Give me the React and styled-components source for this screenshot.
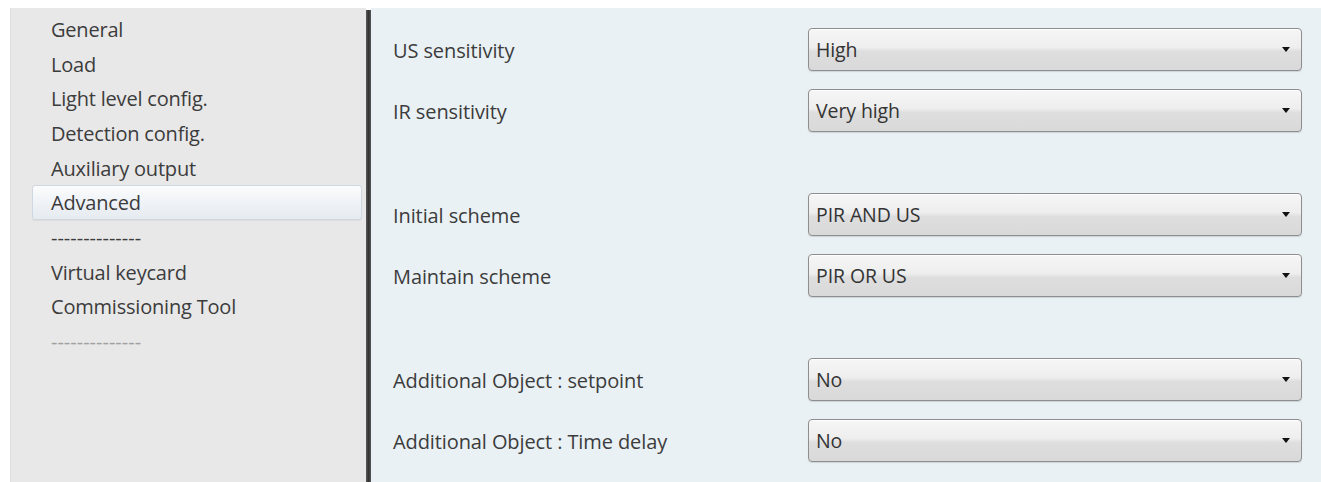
import React from 'react';
import styled, { createGlobalStyle } from 'styled-components';

const GlobalStyle = createGlobalStyle`
  html, body {
    margin: 0;
    padding: 0;
    background: #ffffff;
  }
  body {
    font-family: "Open Sans", "Noto Sans", sans-serif;
    -webkit-font-smoothing: antialiased;
  }
`;

const menuItems = [
  { label: 'General' },
  { label: 'Load' },
  { label: 'Light level config.' },
  { label: 'Detection config.' },
  { label: 'Auxiliary output' },
  { label: 'Advanced', active: true },
  { label: '--------------', separator: 'dark' },
  { label: 'Virtual keycard' },
  { label: 'Commissioning Tool' },
  { label: '--------------', separator: 'light' },
];

const groups = [
  [
    { label: 'US sensitivity', value: 'High' },
    { label: 'IR sensitivity', value: 'Very high' },
  ],
  [
    { label: 'Initial scheme', value: 'PIR AND US' },
    { label: 'Maintain scheme', value: 'PIR OR US' },
  ],
  [
    { label: 'Additional Object : setpoint', value: 'No' },
    { label: 'Additional Object : Time delay', value: 'No' },
  ],
];

const Window = styled.div`
  display: flex;
  height: 482px;
  padding: 8px 0 0 10px;
  box-sizing: border-box;
  overflow: hidden;
`;

const Sidebar = styled.nav`
  width: 356px;
  flex-shrink: 0;
  background: #e8e8e8;
  border-left: 1px solid #dddddd;
  box-sizing: border-box;
  padding: 4px 4px 0 21px;
`;

const MenuItem = styled.div`
  height: 34.7px;
  display: flex;
  align-items: center;
  padding-left: 18px;
  box-sizing: border-box;
  font-size: 20px;
  color: ${p => (p.separator === 'light' ? '#a0a0a0' : '#3c3c3c')};
  letter-spacing: ${p => (p.separator ? '0' : '-0.2px')};
  border-radius: 3px;
  border: 1px solid ${p => (p.active ? '#cfd8e0' : 'transparent')};
  background: ${p =>
    p.active
      ? 'linear-gradient(to bottom, #fbfcfd 0%, #eef2f6 55%, #e6ebf0 100%)'
      : 'transparent'};
  box-shadow: ${p => (p.active ? '0 1px 1px rgba(0,0,0,0.05)' : 'none')};
`;

const Divider = styled.div`
  width: 5px;
  flex-shrink: 0;
  margin-top: 2px;
  background: linear-gradient(to right, #5a5a5a, #333333 50%, #555555);
`;

const Content = styled.main`
  flex: 1;
  background: #e9f1f4;
  padding: 20px 19px 0 22px;
  display: flex;
  flex-direction: column;
  gap: 61px;
`;

const Group = styled.section`
  display: flex;
  flex-direction: column;
  gap: 18px;
`;

const Row = styled.div`
  display: grid;
  grid-template-columns: 1fr 494px;
  align-items: center;
  height: 43px;
`;

const Label = styled.span`
  font-size: 20px;
  color: #3c3c3c;
  letter-spacing: -0.1px;
  padding-top: 2px;
`;

const Select = styled.div`
  height: 43px;
  box-sizing: border-box;
  display: flex;
  align-items: center;
  justify-content: space-between;
  padding: 0 11px 0 7px;
  border: 1px solid #8e8e8e;
  border-radius: 4px;
  background: linear-gradient(to bottom, #f6f6f6 0%, #eeeeee 45%, #dedede 55%, #d9d9d9 100%);
  box-shadow: inset 0 1px 0 #ffffff, 0 1px 1px rgba(0, 0, 0, 0.12);
  font-size: 19.5px;
  color: #333333;
  letter-spacing: -0.1px;
`;

const Arrow = styled.span`
  width: 0;
  height: 0;
  border-left: 4px solid transparent;
  border-right: 4px solid transparent;
  border-top: 5px solid #111111;
`;

export default function App() {
  return (
    <>
      <GlobalStyle />
      <Window>
        <Sidebar>
          {menuItems.map((item, i) => (
            <MenuItem key={i} active={item.active} separator={item.separator}>
              {item.label}
            </MenuItem>
          ))}
        </Sidebar>
        <Divider />
        <Content>
          {groups.map((rows, g) => (
            <Group key={g}>
              {rows.map(row => (
                <Row key={row.label}>
                  <Label>{row.label}</Label>
                  <Select>
                    <span>{row.value}</span>
                    <Arrow />
                  </Select>
                </Row>
              ))}
            </Group>
          ))}
        </Content>
      </Window>
    </>
  );
}
